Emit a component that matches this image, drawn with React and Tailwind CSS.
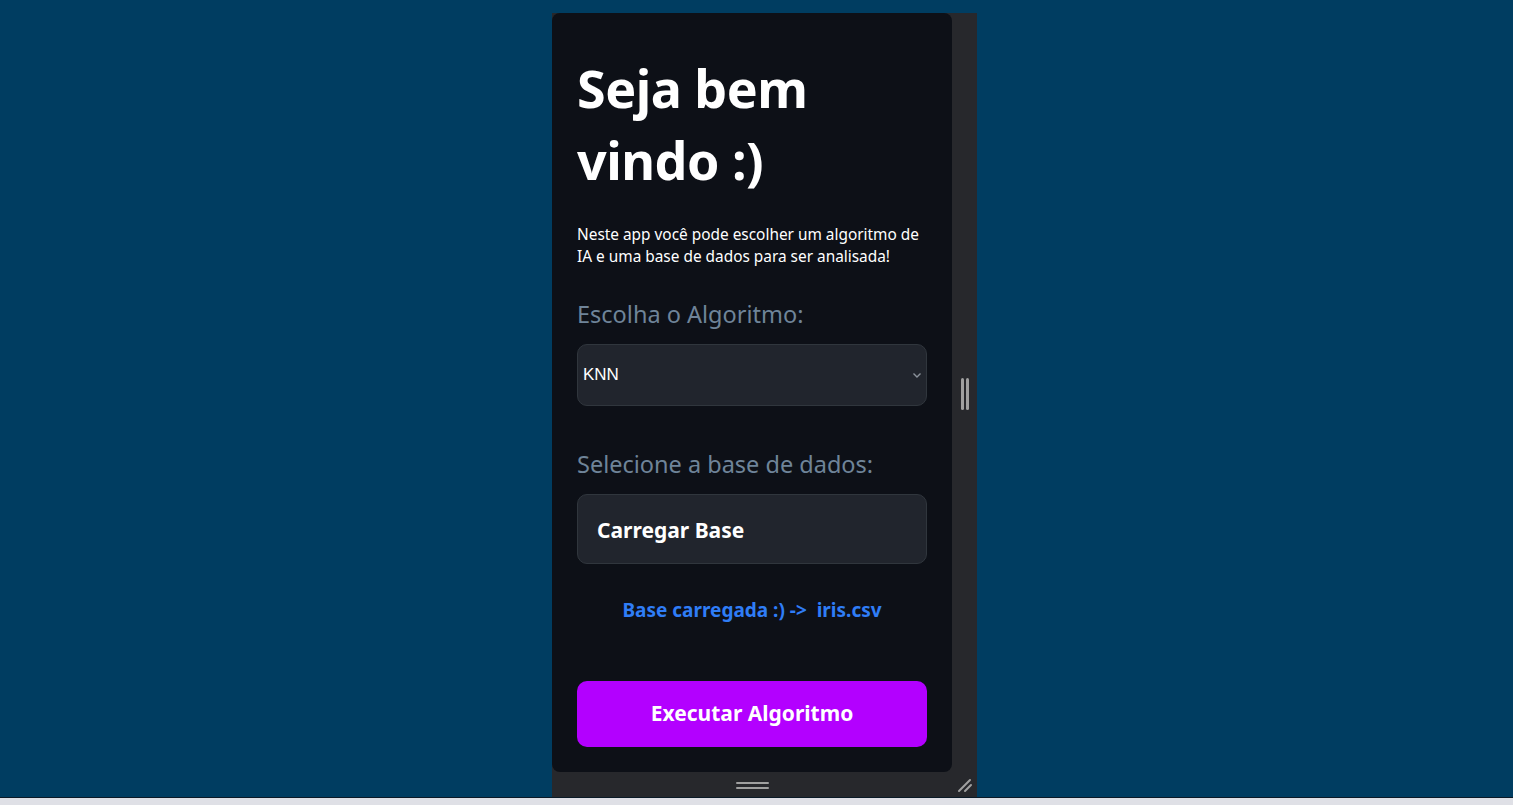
import React from 'react';

const App = () => {
  return (
    <div className="w-full h-[805px] flex flex-col bg-[#003d61] overflow-hidden" style={{ fontFamily: '"Noto Sans", sans-serif' }}>
      <div className="h-[797px] flex justify-center pt-[13px] pl-[16px]">
        {/* emulated device frame */}
        <div className="w-[425px] h-[784px] bg-[#27282c] flex flex-col">
          <div className="flex flex-1">
            <div className="w-[400px] h-[759px] bg-[#0d1017] rounded-lg px-[25px] pt-[39px] flex flex-col">
              <h1 className="text-[52px] leading-[72px] font-bold text-white tracking-[-0.5px]">
                Seja bem vindo :)
              </h1>
              <p className="mt-[28px] text-[15.4px] leading-[22px] text-white">
                Neste app você pode escolher um algoritmo de IA e uma base de dados para ser analisada!
              </p>
              <label className="mt-[30px] text-[23.5px] leading-[32px] text-[#6f8499]">
                Escolha o Algoritmo:
              </label>
              <div className="mt-[14px] h-[62px] rounded-[10px] bg-[#21252d] border border-[#30363d] flex items-center justify-between pl-[5px] pr-[3px]">
                <span className="text-[17px] text-white" style={{ fontFamily: '"Liberation Sans", Arial, sans-serif' }}>KNN</span>
                <svg width="12" height="12" viewBox="0 0 12 12" className="text-[#8b929b]">
                  <path d="M2.5 4.5l3.5 3.5 3.5-3.5" fill="none" stroke="currentColor" strokeWidth="1.4" />
                </svg>
              </div>
              <label className="mt-[42px] text-[23.5px] leading-[32px] text-[#6f8499]">
                Selecione a base de dados:
              </label>
              <div className="mt-[14px] h-[70px] rounded-[10px] bg-[#21252d] border border-[#30363d] flex items-center pl-[19px]">
                <span className="text-[21px] font-bold text-white mt-[3px]">Carregar Base</span>
              </div>
              <p className="mt-[33px] text-center text-[19px] leading-[26px] font-bold text-[#2f7df6]">
                Base carregada :) -&gt;&nbsp; iris.csv
              </p>
              <button className="mt-[58px] h-[66px] rounded-[10px] bg-[#b300ff] text-white text-[21px] font-bold">
                Executar Algoritmo
              </button>
            </div>
            {/* right resize handle */}
            <div className="flex-1 flex items-center justify-center">
              <div className="flex gap-[2px] h-[32px] mt-[2px]">
                <div className="w-[3px] h-full bg-[#a0a0a0] rounded-sm" />
                <div className="w-[3px] h-full bg-[#a0a0a0] rounded-sm" />
              </div>
            </div>
          </div>
          {/* bottom resize handle */}
          <div className="h-[25px] flex items-center relative">
            <div className="w-[400px] flex justify-center">
              <div className="flex flex-col gap-[3px] w-[33px] mt-[2px]">
                <div className="h-[2px] bg-[#a0a0a0] rounded-sm" />
                <div className="h-[2px] bg-[#a0a0a0] rounded-sm" />
              </div>
            </div>
            <svg width="16" height="16" viewBox="0 0 16 16" className="absolute right-[4px] top-[5px] text-[#a0a0a0]">
              <path d="M2 14L13 3M8 14L14 8" stroke="currentColor" strokeWidth="2" strokeLinecap="round" />
            </svg>
          </div>
        </div>
      </div>
      <div className="h-px bg-[#0a1a27]" />
      <div className="flex-1 bg-[#dfe0e6]" />
    </div>
  );
};

export default App;
